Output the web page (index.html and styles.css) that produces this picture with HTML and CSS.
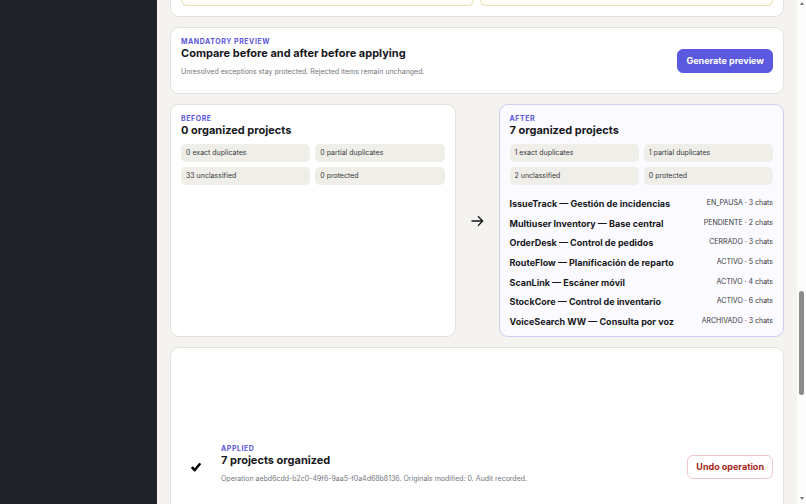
FILE: index.html
```html
<!DOCTYPE html>
<html lang="en">
<head>
    <meta charset="utf-8">
    <title>Chat organizer</title>
    <link rel="stylesheet" href="styles.css">
</head>
<body>
<aside class="sidebar"></aside>
<main class="content">
    <section class="card exceptions">
        <div class="exception"></div>
        <div class="exception"></div>
    </section>

    <section class="card preview">
        <div>
            <p class="eyebrow">MANDATORY PREVIEW</p>
            <h2>Compare before and after before applying</h2>
            <p class="note">Unresolved exceptions stay protected. Rejected items remain unchanged.</p>
        </div>
        <button class="button primary" type="button">Generate preview</button>
    </section>

    <section class="compare">
        <article class="card">
            <p class="eyebrow">BEFORE</p>
            <h2>0 organized projects</h2>
            <div class="stats">
                <span>0 exact duplicates</span>
                <span>0 partial duplicates</span>
                <span>33 unclassified</span>
                <span>0 protected</span>
            </div>
        </article>
        <svg class="arrow" viewBox="0 0 14 14" aria-hidden="true">
            <path d="M1.5 7h11M8 2.3 12.7 7 8 11.7"/>
        </svg>
        <article class="card after">
            <p class="eyebrow">AFTER</p>
            <h2>7 organized projects</h2>
            <div class="stats">
                <span>1 exact duplicates</span>
                <span>1 partial duplicates</span>
                <span>2 unclassified</span>
                <span>0 protected</span>
            </div>
            <ul class="projects">
                <li><strong>IssueTrack — Gestión de incidencias</strong><span>EN_PAUSA · 3 chats</span></li>
                <li><strong>Multiuser Inventory — Base central</strong><span>PENDIENTE · 2 chats</span></li>
                <li><strong>OrderDesk — Control de pedidos</strong><span>CERRADO · 3 chats</span></li>
                <li><strong>RouteFlow — Planificación de reparto</strong><span>ACTIVO · 5 chats</span></li>
                <li><strong>ScanLink — Escáner móvil</strong><span>ACTIVO · 4 chats</span></li>
                <li><strong>StockCore — Control de inventario</strong><span>ACTIVO · 6 chats</span></li>
                <li><strong>VoiceSearch WW — Consulta por voz</strong><span>ARCHIVADO · 3 chats</span></li>
            </ul>
        </article>
    </section>

    <section class="card applied">
        <svg class="check" viewBox="0 0 12 12" aria-hidden="true">
            <path d="M.8 6.7 2.9 5.2 4.7 7.3 9.3 1.7 11.3 3 5.2 10.4H4.1z"/>
        </svg>
        <div class="result">
            <p class="eyebrow">APPLIED</p>
            <h2>7 projects organized</h2>
            <p class="note">Operation aebd6cdd-b2c0-49f6-9aa5-f0a4d68b8136. Originals modified: 0. Audit recorded.</p>
        </div>
        <button class="button danger" type="button">Undo operation</button>
    </section>
</main>
<div class="scrollbar" aria-hidden="true">
    <span class="up"></span>
    <span class="thumb"></span>
    <span class="down"></span>
</div>
</body>
</html>
```
FILE: styles.css
```css
* {
    box-sizing: border-box;
}

body {
    display: flex;
    height: 100vh;
    margin: 0;
    overflow: hidden;
    background: #f4f3ef;
    color: #17181c;
    font-family: Inter, sans-serif;
    font-size: 7px;
    line-height: 10px;
}

h2,
p,
ul {
    margin: 0;
    padding: 0;
}

h2 {
    font-size: 11px;
    line-height: 14px;
    font-weight: 700;
}

.sidebar {
    flex: none;
    width: 157px;
    background: #202328;
}

.content {
    flex: 1;
    min-width: 0;
    display: flex;
    flex-direction: column;
    gap: 10px;
    padding: 0 13px;
}

.card {
    flex: none;
    padding: 10px;
    border: 1px solid #e2e0db;
    border-radius: 9px;
    background: #fff;
}

.eyebrow {
    color: #5b57dd;
    font-weight: 700;
    line-height: 8px;
    letter-spacing: 0.08em;
}

.note {
    margin: 6px 0;
    color: #73767c;
    line-height: 11px;
}

.exceptions {
    display: grid;
    grid-template-columns: 1fr 1fr;
    gap: 6px;
    padding-top: 0;
    border-top: 0;
    border-radius: 0 0 9px 9px;
}

.exception {
    height: 6px;
    border: 1px solid #eadfb6;
    border-top: 0;
    border-radius: 0 0 7px 7px;
    background: #fffef8;
}

.preview {
    display: flex;
    align-items: center;
    justify-content: space-between;
}

.button {
    flex: none;
    padding: 5px 8px;
    border: 1px solid;
    border-radius: 6px;
    font-family: inherit;
    font-size: 9px;
    font-weight: 700;
    line-height: 12px;
}

.primary {
    border-color: #5b59df;
    background: #5b59df;
    color: #fff;
}

.danger {
    border-color: #efc9c7;
    background: #fff;
    color: #a91f18;
}

.compare {
    display: grid;
    grid-template-columns: 1fr 43px 1fr;
    align-items: stretch;
    min-height: 233px;
}

.arrow {
    width: 14px;
    height: 14px;
    place-self: center;
    fill: none;
    stroke: #17181c;
    stroke-width: 1.3;
}

.after {
    display: flex;
    flex-direction: column;
    padding-bottom: 8px;
    border-color: #cfcdf1;
    background: #fbfaff;
}

.stats {
    display: grid;
    grid-template-columns: 1fr 1fr;
    gap: 5px;
    margin-top: 7px;
    color: #36383c;
}

.stats span {
    padding: 4px 5px;
    border-radius: 5px;
    background: #efeee9;
}

.projects {
    flex: 1;
    display: grid;
    align-content: space-between;
    margin-top: 13px;
    list-style: none;
}

.projects li {
    display: flex;
    justify-content: space-between;
}

.projects strong {
    font-size: 9px;
    line-height: 12px;
}

.projects span {
    color: #36383c;
}

.applied {
    display: flex;
    align-items: center;
    min-height: 240px;
}

.check {
    width: 12px;
    height: 12px;
    margin: 0 19px 0 9px;
}

.result {
    flex: 1;
}

.scrollbar {
    flex: none;
    display: grid;
    grid-template-rows: 291px 104px 1fr;
    justify-items: center;
    width: 9px;
    background: #fcfcfc;
}

.thumb {
    width: 5px;
    border-radius: 3px;
    background: #8b8b8b;
}

.up,
.down {
    width: 0;
    height: 3px;
    border: 2px solid transparent;
}

.up {
    margin-top: 2px;
    border-top: 0;
    border-bottom: 3px solid #777;
}

.down {
    align-self: end;
    margin-bottom: 4px;
    border-top: 3px solid #777;
    border-bottom: 0;
}
```
